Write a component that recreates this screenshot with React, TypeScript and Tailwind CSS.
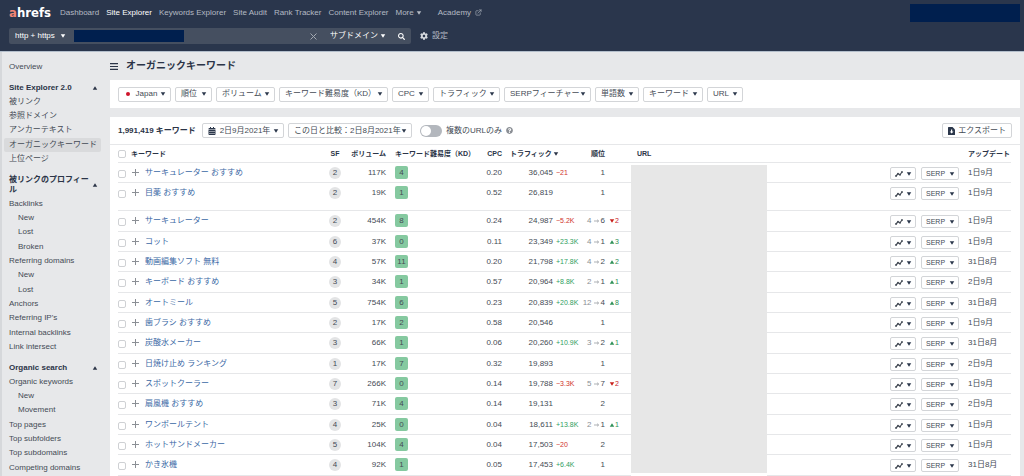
import React from "react";
import { FaCalendarAlt, FaCog, FaQuestionCircle, FaSearch } from "react-icons/fa";
import { FiExternalLink } from "react-icons/fi";

type Row = {
  keyword: string;
  sf: number;
  volume: string;
  kd: number;
  cpc: string;
  traffic: string;
  trafficDiff?: string;
  prev?: number;
  rank: number;
  updated: string;
};

const rows: Row[] = [
  { keyword: "サーキュレーター おすすめ", sf: 2, volume: "117K", kd: 4, cpc: "0.20", traffic: "36,045", trafficDiff: "−21", rank: 1, updated: "1日9月" },
  { keyword: "目薬 おすすめ", sf: 2, volume: "19K", kd: 1, cpc: "0.52", traffic: "26,819", rank: 1, updated: "1日9月" },
  { keyword: "サーキュレーター", sf: 2, volume: "454K", kd: 8, cpc: "0.24", traffic: "24,987", trafficDiff: "−5.2K", prev: 4, rank: 6, updated: "1日9月" },
  { keyword: "コット", sf: 6, volume: "37K", kd: 0, cpc: "0.11", traffic: "23,349", trafficDiff: "+23.3K", prev: 4, rank: 1, updated: "1日9月" },
  { keyword: "動画編集ソフト 無料", sf: 4, volume: "57K", kd: 11, cpc: "0.20", traffic: "21,798", trafficDiff: "+17.8K", prev: 4, rank: 2, updated: "31日8月" },
  { keyword: "キーボード おすすめ", sf: 3, volume: "34K", kd: 1, cpc: "0.57", traffic: "20,964", trafficDiff: "+8.8K", prev: 2, rank: 1, updated: "2日9月" },
  { keyword: "オートミール", sf: 5, volume: "754K", kd: 6, cpc: "0.23", traffic: "20,839", trafficDiff: "+20.8K", prev: 12, rank: 4, updated: "31日8月" },
  { keyword: "歯ブラシ おすすめ", sf: 2, volume: "17K", kd: 2, cpc: "0.58", traffic: "20,546", rank: 1, updated: "1日9月" },
  { keyword: "炭酸水メーカー", sf: 3, volume: "66K", kd: 1, cpc: "0.06", traffic: "20,260", trafficDiff: "+10.9K", prev: 3, rank: 2, updated: "31日8月" },
  { keyword: "日焼け止め ランキング", sf: 1, volume: "17K", kd: 7, cpc: "0.32", traffic: "19,893", rank: 1, updated: "2日9月" },
  { keyword: "スポットクーラー", sf: 7, volume: "266K", kd: 0, cpc: "0.14", traffic: "19,788", trafficDiff: "−3.3K", prev: 5, rank: 7, updated: "1日9月" },
  { keyword: "扇風機 おすすめ", sf: 3, volume: "71K", kd: 4, cpc: "0.14", traffic: "19,131", rank: 2, updated: "2日9月" },
  { keyword: "ワンポールテント", sf: 4, volume: "25K", kd: 0, cpc: "0.04", traffic: "18,611", trafficDiff: "+13.8K", prev: 2, rank: 1, updated: "1日9月" },
  { keyword: "ホットサンドメーカー", sf: 5, volume: "104K", kd: 4, cpc: "0.04", traffic: "17,503", trafficDiff: "−20", rank: 2, updated: "1日9月" },
  { keyword: "かき氷機", sf: 4, volume: "92K", kd: 1, cpc: "0.05", traffic: "17,453", trafficDiff: "+6.4K", rank: 1, updated: "31日8月" },
];

const filters = [
  { label: "Japan", width: "w-[53px]", flag: true },
  { label: "順位", width: "w-[37px]" },
  { label: "ボリューム", width: "w-[59px]" },
  { label: "キーワード難易度（KD）", width: "w-[109px]" },
  { label: "CPC", width: "w-[37px]" },
  { label: "トラフィック", width: "w-[67px]" },
  { label: "SERPフィーチャー", width: "w-[87px]" },
  { label: "単語数", width: "w-[44px]" },
  { label: "キーワード", width: "w-[60px]" },
  { label: "URL", width: "w-[36px]" },
];

const sections = [
  {
    title: "Site Explorer 2.0",
    items: [
      { label: "被リンク" },
      { label: "参照ドメイン" },
      { label: "アンカーテキスト" },
      { label: "オーガニックキーワード", active: true },
      { label: "上位ページ" },
    ],
  },
  {
    title: "被リンクのプロフィール",
    items: [
      { label: "Backlinks" },
      { label: "New", sub: true },
      { label: "Lost", sub: true },
      { label: "Broken", sub: true },
      { label: "Referring domains" },
      { label: "New", sub: true },
      { label: "Lost", sub: true },
      { label: "Anchors" },
      { label: "Referring IP's" },
      { label: "Internal backlinks" },
      { label: "Link intersect" },
    ],
  },
  {
    title: "Organic search",
    items: [
      { label: "Organic keywords" },
      { label: "New", sub: true },
      { label: "Movement", sub: true },
      { label: "Top pages" },
      { label: "Top subfolders" },
      { label: "Top subdomains" },
      { label: "Competing domains" },
    ],
  },
] as { title: string; items: { label: string; sub?: boolean; active?: boolean }[] }[];

const Caret = ({ up = false }: { up?: boolean }) => (
  <svg viewBox="0 0 8 8" className="size-1 shrink-0 overflow-visible fill-current" aria-hidden="true">
    <path d={up ? "M-.5 7.5h9L4 .5z" : "M-.5.5h9L4 7.5z"} />
  </svg>
);

const TrendIcon = () => (
  <svg viewBox="0 0 16 12" className="h-[6px] w-2 shrink-0" fill="none" stroke="currentColor" strokeWidth="2.4" strokeLinejoin="round" aria-hidden="true">
    <path d="M2 10 6 5.5 10 7.5 14 2" />
    <g fill="currentColor" stroke="none">
      <circle cx="2" cy="10" r="1.8" />
      <circle cx="6" cy="5.5" r="1.8" />
      <circle cx="10" cy="7.5" r="1.8" />
      <circle cx="14" cy="2" r="1.8" />
    </g>
  </svg>
);

const ExportIcon = () => (
  <svg viewBox="0 0 14 16" className="h-2 w-[7px] shrink-0" aria-hidden="true">
    <path d="M1 0h8l5 5v10a1 1 0 0 1-1 1H1a1 1 0 0 1-1-1V1a1 1 0 0 1 1-1z" fill="currentColor" />
    <path d="M6 5h2.4v4H11l-3.8 4L3.4 9H6z" fill="#fff" />
  </svg>
);

const PlusIcon = () => (
  <svg viewBox="0 0 7 7" className="size-[7px]" stroke="#8b8f95" aria-hidden="true">
    <path d="M3.5 0v7M0 3.5h7" />
  </svg>
);

const MenuButton = ({ className = "", children }: { className?: string; children: React.ReactNode }) => (
  <button
    type="button"
    aria-haspopup="menu"
    className={`flex shrink-0 items-center justify-between rounded-[2px] border border-[#d3d5d8] bg-white whitespace-nowrap text-[#444b55] ${className}`}
  >
    {children}
    <span className="text-[#2b374b]">
      <Caret />
    </span>
  </button>
);

const TickBox = ({ label }: { label: string }) => (
  <input
    type="checkbox"
    aria-label={label}
    className="block size-2 appearance-none rounded-[2px] border border-[#cfd1d4] bg-white checked:bg-[#2b374b]"
  />
);

const Header = () => (
  <header className="h-[52px] shrink-0 border-b border-[#b4bfcc] bg-[#2a364c] pr-1 text-[#b4bac3]">
    <div className="flex h-[25px] items-center">
      <a href="#" className="w-[51px] pl-[9px] font-['DejaVu_Sans_Condensed','DejaVu_Sans',sans-serif] text-[13px] leading-5 font-bold text-white">
        <span className="text-[#ef8576]">a</span>hrefs
      </a>
      <nav className="ml-[9px] flex flex-1 items-center gap-[7px] whitespace-nowrap">
        <a href="#">Dashboard</a>
        <a href="#" className="text-white" aria-current="page">Site Explorer</a>
        <a href="#">Keywords Explorer</a>
        <a href="#">Site Audit</a>
        <a href="#">Rank Tracker</a>
        <a href="#">Content Explorer</a>
        <button type="button" className="flex items-center gap-[3px]">
          More <Caret />
        </button>
        <a href="#" className="ml-[10px] flex items-center gap-1">
          Academy <FiExternalLink className="size-[7px]" />
        </a>
      </nav>
      <div className="h-[18px] w-[110px] bg-[#001f4e]" />
    </div>

    <form className="flex items-center pt-[3px] pl-[9px]" onSubmit={(e) => e.preventDefault()}>
      <div className="flex h-4 w-[402px] items-center rounded-[2px] bg-[#454f60] text-white">
        <label className="flex w-[65px] items-center gap-1 pl-[6px]">
          <select aria-label="プロトコル" className="w-[42px] appearance-none bg-transparent outline-none">
            <option>http + https</option>
          </select>
          <Caret />
        </label>
        <span className="h-3 w-[110px] bg-[#001f4e]" />
        <input type="text" aria-label="ドメインまたはURL" className="min-w-0 flex-1 bg-transparent px-1 outline-none" />
        <button type="button" aria-label="クリア" className="px-[5px] text-[#a3a9b2]">
          <svg viewBox="0 0 7 7" className="size-[7px]" stroke="currentColor">
            <path d="M.5.5l6 6M6.5.5l-6 6" />
          </svg>
        </button>
        <label className="ml-2 flex items-center gap-[3px]">
          <select aria-label="検索モード" className="w-12 appearance-none bg-transparent outline-none">
            <option>サブドメイン</option>
          </select>
          <Caret />
        </label>
        <button type="submit" aria-label="検索" className="mr-[6px] ml-[13px]">
          <FaSearch className="size-[7px]" />
        </button>
      </div>
      <button type="button" className="ml-[9px] flex items-center gap-1">
        <FaCog className="size-2 text-[#d5d9de]" />
        設定
      </button>
    </form>
  </header>
);

const Sidebar = () => (
  <aside className="w-[110px] shrink-0 border-l-2 border-[#d6d8db] pt-2">
    <a href="#" className="block h-[14px] pl-[7px] leading-[14px]">Overview</a>
    {sections.map((s) => (
      <section key={s.title} className="mt-[7px]">
        <h2 className="flex items-center justify-between py-[2px] pr-[13px] pl-[7px] leading-[10px] font-bold text-[#2b3447]">
          <span className="w-[82px]">{s.title}</span>
          <Caret up />
        </h2>
        <ul className="pr-[9px] pl-[2px]">
          {s.items.map((item, i) => (
            <li key={i} className="h-[14px] nth-[3n]:h-[15px]">
              <a
                href="#"
                className={`block rounded-[2px] leading-[14px] whitespace-nowrap ${item.sub ? "pl-[14px]" : "pl-[5px]"} ${item.active ? "bg-[#d9dadc]" : ""}`}
              >
                {item.label}
              </a>
            </li>
          ))}
        </ul>
      </section>
    ))}
  </aside>
);

const RankDiff = ({ prev, rank }: { prev: number; rank: number }) => {
  const up = rank < prev;
  return (
    <span className={`flex items-center gap-[1px] text-[7px] ${up ? "text-[#2f9158]" : "text-[#c8201c]"}`}>
      <Caret up={up} />
      {Math.abs(prev - rank)}
    </span>
  );
};

// the arrow between the previous and the current position
const ArrowIcon = () => (
  <svg viewBox="0 0 5 4" className="mx-[2px] h-1 w-[5px]" fill="none" stroke="currentColor" strokeWidth=".7" aria-label="→">
    <path d="M0 2h4.5M3.2.7 4.6 2 3.2 3.3" />
  </svg>
);

const cell = "border-b border-[#e6e7e9] p-0";
const head = "border-b border-[#e6e7e9] p-0 text-[7px]";

const KeywordTable = () => (
  <table className="w-full table-fixed border-separate border-spacing-0 leading-[19px] whitespace-nowrap">
    <colgroup>
      <col className="w-[13px]" />
      <col className="w-[14px]" />
      <col />
      <col className="w-[18px]" />
      <col className="w-[42px]" />
      <col className="w-[90px]" />
      <col className="w-[26px]" />
      <col className="w-[51px]" />
      <col className="w-[27px]" />
      <col className="w-[25px]" />
      <col className="w-[26px]" />
      <col className="w-[136px]" />
      <col className="w-[192px]" />
      <col className="w-[52px]" />
    </colgroup>
    <thead>
      <tr className="text-left leading-[17px] text-[#2b3447]">
        <th className={head}><TickBox label="すべて選択" /></th>
        <th className={head} colSpan={2}>キーワード</th>
        <th className={`${head} text-center`}>SF</th>
        <th className={`${head} text-right`}>ボリューム</th>
        <th className={`${head} pl-[9px]`}>キーワード難易度（KD）</th>
        <th className={`${head} text-right`}>CPC</th>
        <th className={`${head} pl-2`} colSpan={2} aria-sort="descending">
          <span className="flex items-center gap-[2px]">トラフィック <Caret /></span>
        </th>
        <th className={`${head} text-right`}>順位</th>
        <th className={head} />
        <th className={`${head} pl-[6px]`}>URL</th>
        <th className={head} />
        <th className={`${head} pl-[9px]`}>アップデート</th>
      </tr>
    </thead>
    <tbody className="align-top">
      {rows.map((r, i) => (
        <tr key={r.keyword} className={i === 1 ? "h-7" : "h-5 nth-[3n]:h-[21px]"}>
          <td className={`${cell} pt-[7px]`}><TickBox label={r.keyword} /></td>
          <td className={`${cell} pt-[6px]`}>
            <button type="button" aria-label="リストに追加" className="ml-[1px] block"><PlusIcon /></button>
          </td>
          <td className={cell}><a href="#" className="text-[#3b68a5]">{r.keyword}</a></td>
          <td className={`${cell} pt-1`}>
            <span className="mx-auto block size-3 rounded-full bg-[#e3e4e5] text-center leading-3">{r.sf}</span>
          </td>
          <td className={`${cell} text-right`}>{r.volume}</td>
          <td className={`${cell} pt-[3px] pl-[9px]`}>
            <span className="block h-[13px] w-[13px] rounded-[2px] bg-[#85c9a0] text-center leading-[13px]">{r.kd}</span>
          </td>
          <td className={`${cell} text-right`}>{r.cpc}</td>
          <td className={`${cell} text-right`}>{r.traffic}</td>
          <td className={`${cell} pl-[3px] text-[7px] ${r.trafficDiff?.startsWith("+") ? "text-[#2f9e5f]" : "text-[#d0342c]"}`}>{r.trafficDiff}</td>
          <td className={cell}>
            <span className="flex items-center justify-end">
              {r.prev && <span className="flex items-center text-[#8b8f95]">{r.prev}<ArrowIcon /></span>}
              {r.rank}
            </span>
          </td>
          <td className={`${cell} pl-[5px]`}>{r.prev && <RankDiff prev={r.prev} rank={r.rank} />}</td>
          {i === 0 && <td rowSpan={rows.length} className="border-t-2 border-b-[3px] border-white bg-[#e7e7e7] p-0" />}
          <td className={`${cell} pt-1`}>
            <div className="flex justify-end gap-[5px] text-[7px] leading-none">
              <MenuButton className="h-[13px] w-[26px] px-1"><TrendIcon /></MenuButton>
              <MenuButton className="h-[13px] w-[38px] px-1">SERP</MenuButton>
            </div>
          </td>
          <td className={`${cell} pl-[9px]`}>{r.updated}</td>
        </tr>
      ))}
    </tbody>
  </table>
);

export default function App() {
  return (
    <div lang="ja" className="flex h-screen flex-col overflow-hidden bg-[#e7e8ea] font-['Liberation_Sans','Noto_Sans_CJK_JP',sans-serif] text-[8px] leading-3 text-[#444b55]">
      <Header />
      <div className="flex min-h-0 flex-1">
        <Sidebar />
        <main className="min-w-0 flex-1 pr-1">
          <div className="flex h-7 items-center gap-2 text-[#2b3447]">
            <button type="button" aria-label="メニュー">
              <svg viewBox="0 0 8 7" className="h-[7px] w-2" stroke="currentColor" strokeWidth="1.2">
                <path d="M0 .6h8M0 3.5h8M0 6.4h8" />
              </svg>
            </button>
            <h1 className="text-[10px] font-bold">オーガニックキーワード</h1>
          </div>

          <div className="flex h-7 items-center gap-1 bg-white px-2">
            {filters.map((f) => (
              <MenuButton key={f.label} className={`h-[15px] px-[5px] ${f.width}`}>
                {f.flag && <span className="mx-[2px] size-1 rounded-full bg-[#cf142b]" />}
                {f.label}
              </MenuButton>
            ))}
          </div>

          <div className="mt-[9px] bg-white">
            <div className="flex h-7 items-center border-b border-[#e6e7e9] px-2">
              <strong className="w-[84px] whitespace-nowrap text-[#2b3447]">1,991,419 キーワード</strong>
              <MenuButton className="h-[15px] w-[82px] px-[5px]">
                <FaCalendarAlt className="size-2 text-[#2b374b]" />
                2日9月2021年
              </MenuButton>
              <MenuButton className="ml-1 h-[15px] w-[124px] px-[5px]">この日と比較：2日8月2021年</MenuButton>
              <label className="ml-2 flex items-center gap-1">
                <input
                  type="checkbox"
                  role="switch"
                  className="flex h-3 w-[22px] appearance-none items-center rounded-full bg-[#b3b7bd] px-[1px] before:size-[10px] before:rounded-full before:bg-white checked:justify-end"
                />
                複数のURLのみ
              </label>
              <FaQuestionCircle className="ml-1 size-[7px] text-[#8b8f95]" />
              <button type="button" className="ml-auto flex h-[15px] w-[70px] items-center justify-between rounded-[2px] border border-[#d3d5d8] px-[5px] whitespace-nowrap">
                <span className="text-[#2b374b]"><ExportIcon /></span>
                エクスポート
              </button>
            </div>
            <div className="pr-[9px] pl-2">
              <KeywordTable />
            </div>
          </div>
        </main>
      </div>
    </div>
  );
}
